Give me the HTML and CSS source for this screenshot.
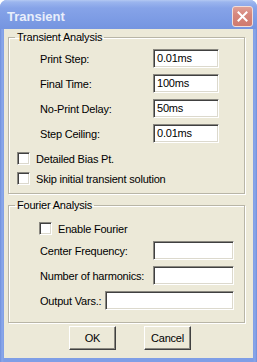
FILE: index.html
```html
<!DOCTYPE html>
<html>
<head>
<meta charset="utf-8">
<link rel="stylesheet" href="styles.css">
</head>
<body>
<div class="window">
  <div class="titlebar">
    <span class="title">Transient</span>
    <span class="close"><svg width="11" height="11" viewBox="0 0 11 11"><path d="M1.5 1.5 L9.5 9.5 M9.5 1.5 L1.5 9.5" stroke="#fff" stroke-width="2" stroke-linecap="square"/></svg></span>
  </div>
  <div class="client">
    <fieldset class="group g1">
      <legend>Transient Analysis</legend>
      <div class="fields1">
        <span class="lbl">Print Step:</span><span class="edit">0.01ms</span>
        <span class="lbl">Final Time:</span><span class="edit">100ms</span>
        <span class="lbl">No-Print Delay:</span><span class="edit">50ms</span>
        <span class="lbl">Step Ceiling:</span><span class="edit">0.01ms</span>
      </div>
      <div class="check first"><span class="box"></span><span>Detailed Bias Pt.</span></div>
      <div class="check second"><span class="box"></span><span>Skip initial transient solution</span></div>
    </fieldset>
    <fieldset class="group g2">
      <legend>Fourier Analysis</legend>
      <div class="check enable"><span class="box"></span><span>Enable Fourier</span></div>
      <div class="fields2">
        <div class="row"><span class="lbl wide">Center Frequency:</span><span class="edit short"></span></div>
        <div class="row"><span class="lbl wide">Number of harmonics:</span><span class="edit short"></span></div>
        <div class="row"><span class="lbl narrow">Output Vars.:</span><span class="edit long"></span></div>
      </div>
    </fieldset>
    <div class="buttons">
      <span class="btn">OK</span>
      <span class="btn">Cancel</span>
    </div>
  </div>
</div>
</body>
</html>
```

FILE: styles.css
```css
html, body {
  margin: 0;
  padding: 0;
}
body {
  width: 257px;
  height: 362px;
  overflow: hidden;
  background: #ffffff;
  font-family: "Liberation Sans", Arial, sans-serif;
  font-size: 11px;
  letter-spacing: -0.2px;
  color: #000;
}
.window {
  width: 257px;
  height: 362px;
  box-sizing: border-box;
  display: flex;
  flex-direction: column;
  background: linear-gradient(to right, #6f8fdc 0, #8ba8ea 2px, #7f9ee6 4px, #7f9ee6 253px, #8aa6e8 255px, #6f8fdc 257px);
  border-radius: 7px 7px 0 0;
}
.titlebar {
  height: 29px;
  box-sizing: border-box;
  display: flex;
  align-items: center;
  padding: 3px 4px 0 7px;
  background: linear-gradient(to bottom, #b4c8f2 0, #9bb5ee 2px, #86a3e8 8px, #7c9be4 20px, #7595e0 29px);
  border-radius: 7px 7px 0 0;
}
.title {
  flex: 1;
  font: bold 13px "Liberation Sans", Arial, sans-serif;
  letter-spacing: 0;
  color: #e8eefb;
}
.close {
  width: 21px;
  height: 21px;
  box-sizing: border-box;
  border: 1px solid #f2ddd8;
  border-radius: 3px;
  background: linear-gradient(to bottom, #e0a097 0, #d6877c 40%, #cf7a6f 100%);
  display: flex;
  align-items: center;
  justify-content: center;
}
.client {
  flex: 1;
  margin: 0 4px 4px;
  background: #ece9d8;
  padding: 2px 0 0 4px;
}
fieldset.group {
  margin: 0;
  padding: 0;
  min-width: 0;
  width: 237px;
  box-sizing: border-box;
  border: 1px solid #b8b5a6;
  box-shadow: inset 1px 1px 0 #ffffff, 1px 1px 0 #ffffff;
}
legend {
  margin-left: 6px;
  padding: 0 2px;
  line-height: 13px;
}
fieldset.g1 {
  padding-bottom: 8px;
}
.fields1 {
  display: grid;
  grid-template-columns: 113px 66px;
  row-gap: 6px;
  align-items: center;
  padding-left: 31px;
  margin-top: 5px;
}
.edit {
  display: block;
  height: 19px;
  box-sizing: border-box;
  background: #fff;
  border: 1px solid;
  border-color: #8a8880 #ffffff #ffffff #8a8880;
  box-shadow: inset 1px 1px 0 #404040, inset -1px -1px 0 #dcd9cd;
  padding: 0 0 0 3px;
  line-height: 17px;
}
.check {
  display: flex;
  align-items: center;
  gap: 6px;
  height: 13px;
  margin-left: 8px;
}
.check.first { margin-top: 9px; }
.check.second { margin-top: 7px; }
.box {
  width: 13px;
  height: 13px;
  box-sizing: border-box;
  background: #fff;
  border: 1px solid;
  border-color: #8a8880 #ffffff #ffffff #8a8880;
  box-shadow: inset 1px 1px 0 #404040, inset -1px -1px 0 #dcd9cd;
}
fieldset.g2 {
  margin-top: 5px;
  padding-bottom: 12px;
}
.check.enable {
  margin-left: 30px;
  margin-top: 10px;
}
.fields2 {
  display: flex;
  flex-direction: column;
  gap: 6px;
  margin-top: 6px;
  padding-left: 31px;
}
.row {
  display: flex;
  align-items: center;
  height: 19px;
}
.lbl.wide { width: 113px; }
.lbl.narrow { width: 65px; }
.edit.short { width: 81px; }
.edit.long { width: 129px; }
.buttons {
  display: flex;
  gap: 28px;
  padding-left: 61px;
  margin-top: 3px;
}
.btn {
  width: 47px;
  height: 24px;
  box-sizing: border-box;
  display: flex;
  align-items: center;
  justify-content: center;
  background: #ece9d8;
  border: 1px solid;
  border-color: #ffffff #404040 #404040 #ffffff;
  box-shadow: inset -1px -1px 0 #8a8880;
}
```
